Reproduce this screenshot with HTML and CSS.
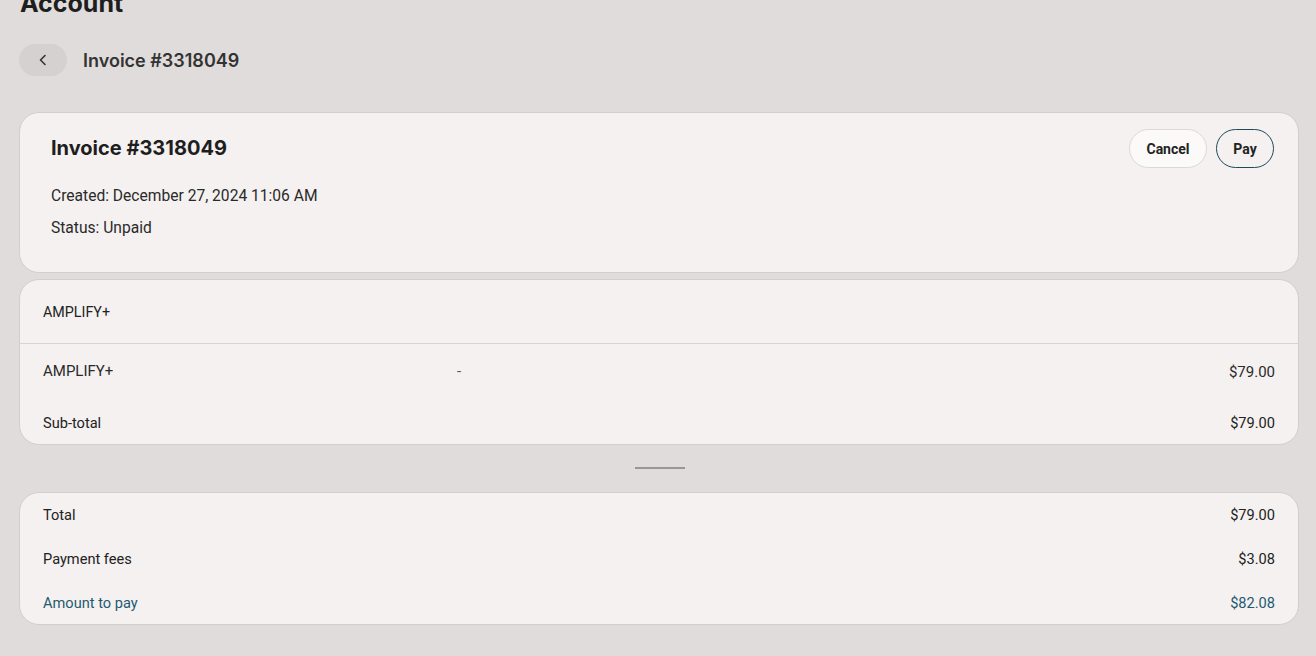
FILE: index.html
```html
<!DOCTYPE html>
<html lang="en">
<head>
    <meta charset="UTF-8">
    <meta name="viewport" content="width=device-width, initial-scale=1.0">
    <title>Account - Invoice #3318049</title>
    <link rel="stylesheet" href="styles.css">
</head>
<body>
    <div class="page">
        <h1 class="page-title">Account</h1>

        <div class="crumb">
            <button class="back-btn" aria-label="Back">
                <svg width="14" height="14" viewBox="0 0 14 14" fill="none">
                    <path d="M9 2.5L4.5 7L9 11.5" stroke="#333" stroke-width="1.6" stroke-linecap="round" stroke-linejoin="round"/>
                </svg>
            </button>
            <span class="crumb-title">Invoice #3318049</span>
        </div>

        <div class="card invoice-card">
            <div class="invoice-info">
                <h2>Invoice #3318049</h2>
                <p>Created: December 27, 2024 11:06 AM</p>
                <p>Status: Unpaid</p>
            </div>
            <div class="actions">
                <button class="btn btn-cancel">Cancel</button>
                <button class="btn btn-pay">Pay</button>
            </div>
        </div>

        <div class="card items-card">
            <div class="items-head">AMPLIFY+</div>
            <div class="item-row">
                <span class="item-name">AMPLIFY+</span>
                <span class="item-desc">-</span>
                <span class="item-price">$79.00</span>
            </div>
            <div class="sum-row">
                <span>Sub-total</span>
                <span>$79.00</span>
            </div>
        </div>

        <div class="handle"></div>

        <div class="card totals-card">
            <div class="sum-row">
                <span>Total</span>
                <span>$79.00</span>
            </div>
            <div class="sum-row">
                <span>Payment fees</span>
                <span>$3.08</span>
            </div>
            <div class="sum-row accent">
                <span>Amount to pay</span>
                <span>$82.08</span>
            </div>
        </div>
    </div>
</body>
</html>
```

FILE: styles.css
```css
body {
    margin: 0;
    background-color: #e0dcdb;
    color: #222;
    font-family: Roboto, "Liberation Sans", Arial, sans-serif;
    overflow: hidden;
}
.page {
    padding: 0 17px 0 19px;
}
.page-title {
    font-family: Inter, Roboto, sans-serif;
    font-size: 25px;
    font-weight: 700;
    color: #1e1e1e;
    margin: -13px 0 0 1px;
    line-height: 32px;
}
.crumb {
    display: flex;
    align-items: center;
    margin-top: 25px;
    height: 32px;
}
.back-btn {
    width: 48px;
    height: 32px;
    border: none;
    border-radius: 16px;
    background-color: #d5d1d0;
    display: flex;
    align-items: center;
    justify-content: center;
    padding: 0;
    cursor: pointer;
}
.crumb-title {
    margin-left: 16px;
    font-family: Inter, Roboto, sans-serif;
    font-size: 18px;
    font-weight: 600;
    color: #333;
}
.card {
    background-color: #f4f1f0;
    border: 1px solid #d2cecd;
    border-radius: 20px;
}
.invoice-card {
    margin-top: 36px;
    height: 159px;
    display: flex;
    justify-content: space-between;
    padding: 0 24px 0 31px;
}
.invoice-info h2 {
    font-family: Inter, Roboto, sans-serif;
    font-size: 20px;
    font-weight: 700;
    color: #1e1e1e;
    margin: 22px 0 25px;
    line-height: 26px;
}
.invoice-info p {
    margin: 0 0 12px;
    font-size: 15.6px;
    line-height: 20px;
    color: #2a2a2a;
}
.actions {
    display: flex;
    gap: 9px;
    margin-top: 16px;
}
.btn {
    height: 39px;
    border-radius: 20px;
    font-family: Roboto, sans-serif;
    font-size: 14px;
    font-weight: 700;
    color: #222;
    cursor: pointer;
    padding: 0;
}
.btn-cancel {
    width: 78px;
    background-color: #fcfaf8;
    border: 1px solid #dcd8d6;
}
.btn-pay {
    width: 58px;
    background-color: #f4f1f0;
    border: 1px solid #1f4a5b;
}
.items-card {
    margin-top: 6px;
}
.items-head {
    height: 63px;
    padding: 0 23px;
    display: flex;
    align-items: center;
    font-size: 14.3px;
    border-bottom: 1px solid #d8d4d3;
}
.item-row {
    display: flex;
    align-items: center;
    height: 53px;
    padding: 0 23px;
    font-size: 15px;
    color: #2a2a2a;
}
.item-name {
    width: 414px;
}
.item-desc {
    flex: 1;
    color: #555;
}
.item-price {
    margin-top: 2px;
}
.sum-row {
    display: flex;
    justify-content: space-between;
    align-items: center;
    height: 44px;
    padding: 0 23px;
    font-size: 14.6px;
    color: #222;
}
.items-card .sum-row {
    height: 42px;
    margin-top: 5px;
}
.handle {
    width: 50px;
    height: 2px;
    background-color: #9b9696;
    margin: 22px auto 0;
    position: relative;
    left: 1px;
}
.totals-card {
    margin-top: 23px;
    height: 131px;
}
.totals-card .sum-row:first-child {
    height: 44px;
}
.sum-row.accent {
    color: #1f5a70;
}
```
